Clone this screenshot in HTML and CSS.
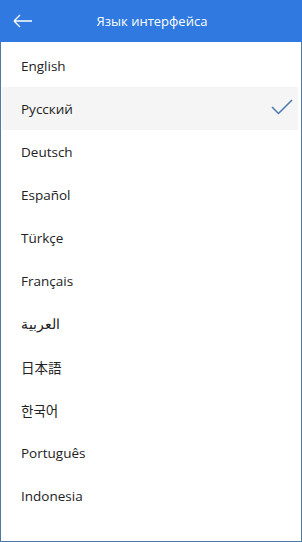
FILE: index.html
```html
<!DOCTYPE html>
<html>
<head>
<meta charset="utf-8">
<link rel="stylesheet" href="styles.css">
</head>
<body>
<div class="window">
  <header class="bar">
    <span class="back">
      <svg width="20" height="14" viewBox="0 0 20 14"><path d="M1 7H19M1 7L7 1M1 7L7 13" fill="none" stroke="#fff" stroke-width="1.4"/></svg>
    </span>
    <h1 class="title">Язык интерфейса</h1>
  </header>
  <ul class="list">
    <li class="item">English</li>
    <li class="item active">Русский
      <svg class="check" width="22" height="16" viewBox="0 0 22 16"><path d="M1 8L7.5 14.5L21 1" fill="none" stroke="#4a78ae" stroke-width="1.5"/></svg>
    </li>
    <li class="item">Deutsch</li>
    <li class="item">Español</li>
    <li class="item">Türkçe</li>
    <li class="item">Français</li>
    <li class="item">العربية</li>
    <li class="item">日本語</li>
    <li class="item">한국어</li>
    <li class="item">Português</li>
    <li class="item">Indonesia</li>
  </ul>
</div>
</body>
</html>
```
FILE: styles.css
```css
html, body {
  margin: 0;
  padding: 0;
}
body {
  width: 302px;
  height: 542px;
  overflow: hidden;
  font-family: "Open Sans", "Noto Sans", "Noto Sans CJK JP", sans-serif;
}
.window {
  box-sizing: border-box;
  width: 302px;
  height: 542px;
  background: #fff;
  border: 1px solid #4f7aa6;
  border-top: none;
  display: flex;
  flex-direction: column;
}
.bar {
  height: 42px;
  margin: 0 -1px;
  background: #2f79e0;
  display: flex;
  align-items: center;
  position: relative;
}
.back {
  display: flex;
  margin-left: 13px;
}
.title {
  position: absolute;
  left: 0;
  right: 0;
  text-align: center;
  margin: 0;
  font-size: 13px;
  font-weight: normal;
  color: #fff;
  padding-left: 2px;
}
.list {
  list-style: none;
  margin: 2px 3px 0 1px;
  padding: 0;
}
.item {
  height: 43px;
  display: flex;
  align-items: center;
  justify-content: space-between;
  padding: 0 5px 0 19px;
  font-size: 13.5px;
  color: #222;
}
.item.active {
  background: #f5f5f5;
}
.check {
  margin-top: -4px;
}
```
